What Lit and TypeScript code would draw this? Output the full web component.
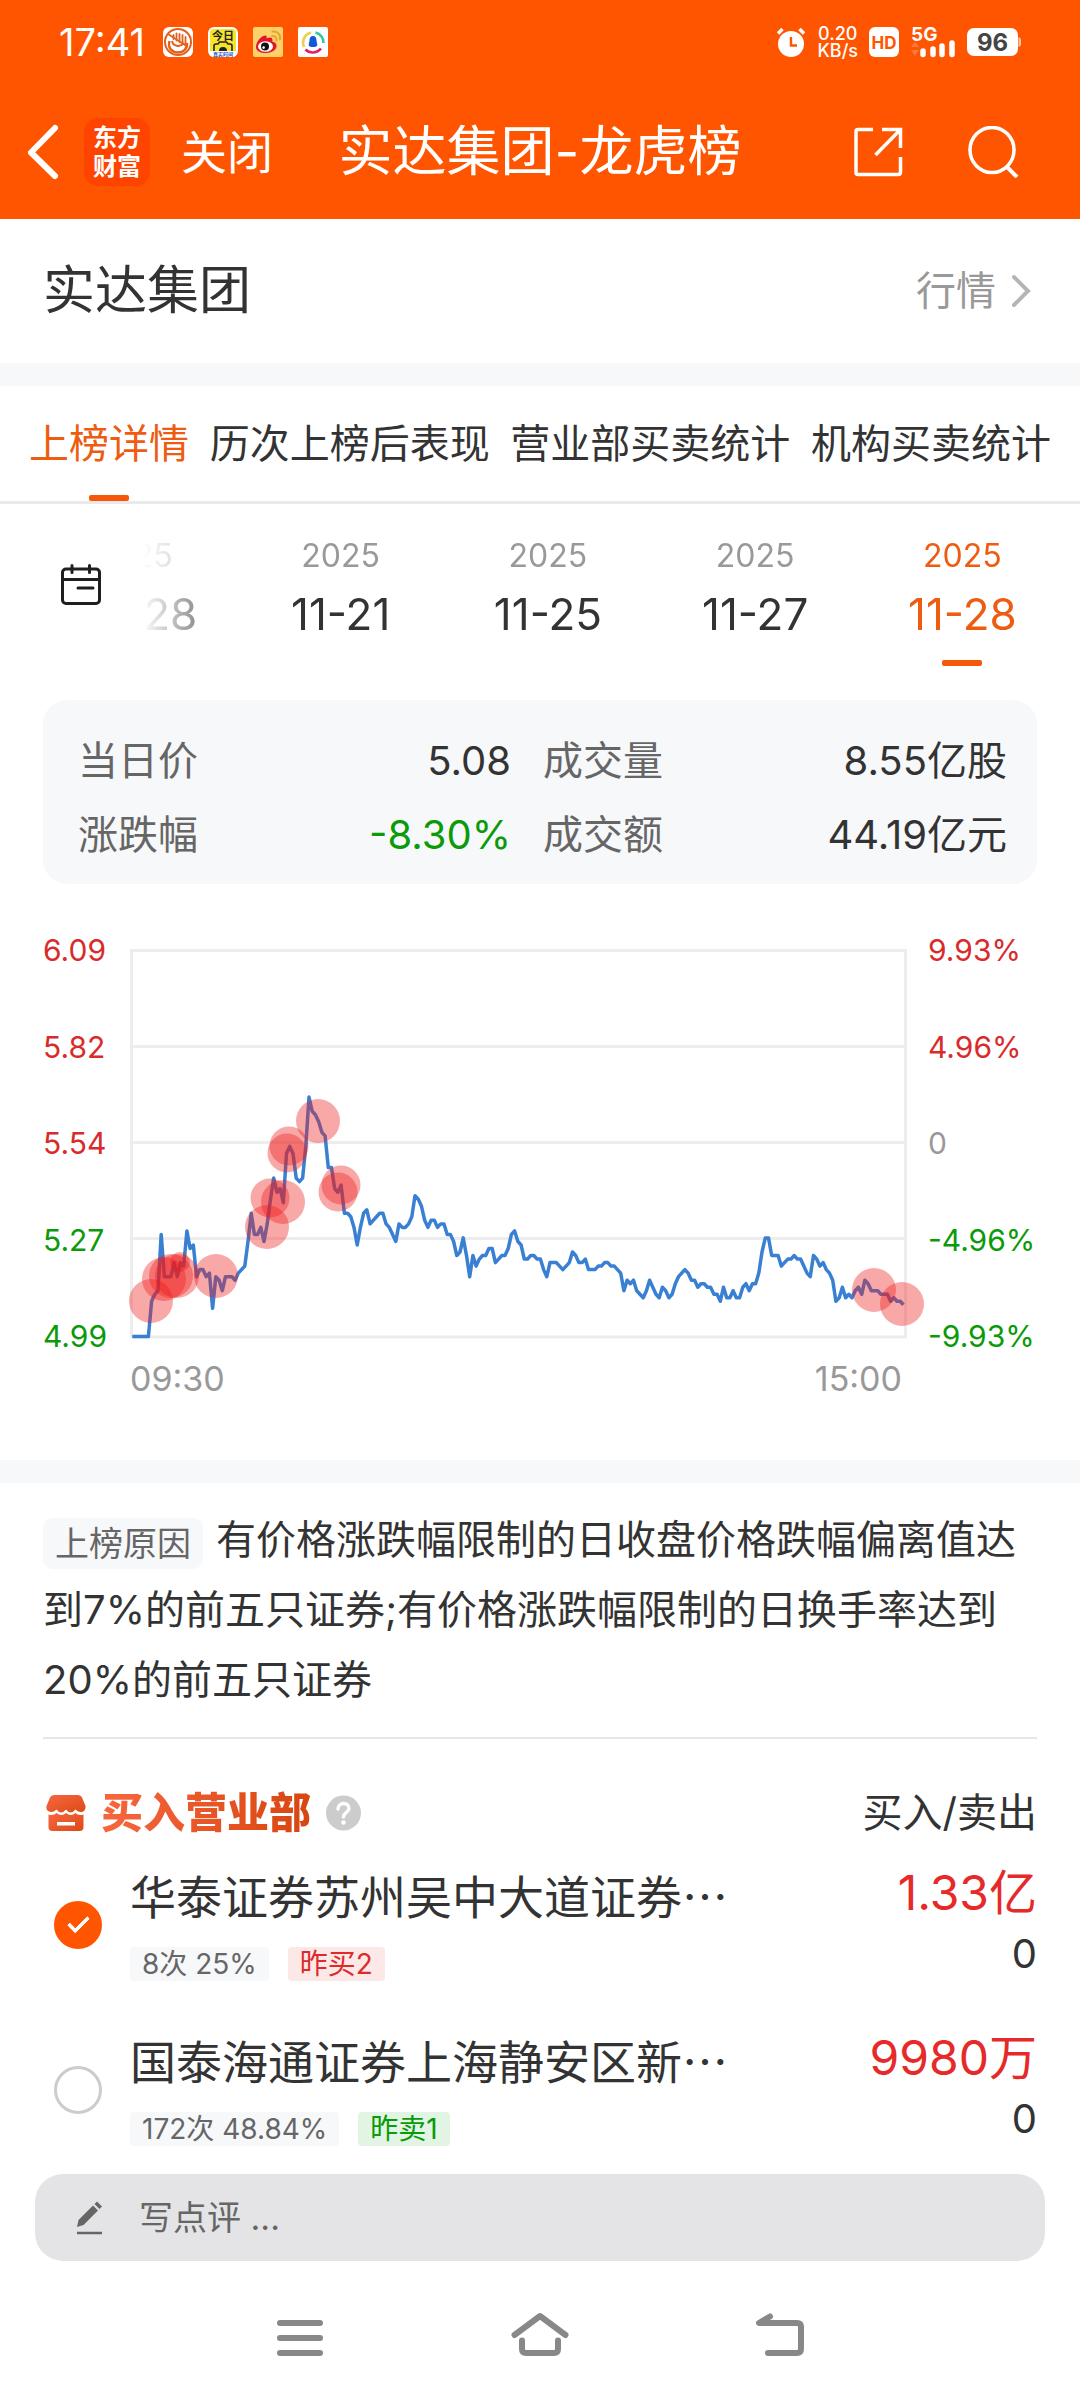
import { LitElement, html, css, svg } from "lit";
import { customElement, state } from "lit/decorators.js";
import { classMap } from "lit/directives/class-map.js";

interface TradingDay {
  year: string;
  day: string;
}

interface Seat {
  name: string;
  record: string;
  flag: string;
  side: "buy" | "sell";
  bought: string;
  sold: string;
}

const TABS = ["上榜详情", "历次上榜后表现", "营业部买卖统计", "机构买卖统计"];

const DAYS: TradingDay[] = [
  { year: "2025", day: "08-28" },
  { year: "2025", day: "11-21" },
  { year: "2025", day: "11-25" },
  { year: "2025", day: "11-27" },
  { year: "2025", day: "11-28" },
];

const SEATS: Seat[] = [
  { name: "华泰证券苏州吴中大道证券…", record: "8次 25%", flag: "昨买2", side: "buy", bought: "1.33亿", sold: "0" },
  { name: "国泰海通证券上海静安区新…", record: "172次 48.84%", flag: "昨卖1", side: "sell", bought: "9980万", sold: "0" },
];

const PRICE_LABELS = [
  { text: "6.09", tone: "up" },
  { text: "5.82", tone: "up" },
  { text: "5.54", tone: "up" },
  { text: "5.27", tone: "down" },
  { text: "4.99", tone: "down" },
];

const PERCENT_LABELS = [
  { text: "9.93%", tone: "up" },
  { text: "4.96%", tone: "up" },
  { text: "0", tone: "flat" },
  { text: "-4.96%", tone: "down" },
  { text: "-9.93%", tone: "down" },
];

/** Price per minute from 09:30 to 15:00, in hundredths of a yuan. */
const MINUTES = [
  499, 499, 499, 499, 499, 499, 509, 511, 512, 528, 516, 516, 516, 520, 516, 520, 519, 529, 524, 525,
  516, 518, 518, 516, 517, 507, 516, 515, 512, 516, 516, 516, 515, 517, 518, 519, 526, 534, 528, 528,
  530, 526, 531, 538, 544, 540, 541, 537, 551, 553, 551, 544, 543, 544, 553, 567, 563, 562, 560, 557,
  556, 547, 547, 541, 540, 542, 534, 534, 533, 530, 525, 530, 534, 535, 531, 532, 533, 534, 534, 531,
  530, 528, 526, 531, 530, 530, 531, 533, 539, 538, 536, 532, 530, 532, 532, 530, 531, 531, 528, 528,
  526, 522, 523, 527, 522, 516, 522, 519, 521, 522, 522, 524, 524, 520, 521, 522, 522, 524, 528, 529,
  526, 525, 521, 521, 522, 522, 521, 521, 518, 516, 520, 520, 520, 519, 518, 519, 520, 523, 522, 520,
  520, 521, 518, 518, 518, 519, 519, 520, 520, 519, 519, 518, 517, 512, 515, 514, 515, 512, 511, 510,
  512, 515, 513, 511, 510, 513, 512, 510, 511, 514, 516, 517, 518, 517, 515, 515, 513, 514, 514, 513,
  513, 511, 511, 509, 513, 510, 510, 512, 510, 510, 513, 514, 512, 514, 514, 517, 523, 527, 527, 522,
  522, 522, 519, 520, 521, 521, 522, 521, 521, 519, 517, 516, 522, 521, 519, 520, 518, 517, 515, 509,
  510, 513, 510, 511, 510, 512, 513, 511, 515, 514, 512, 512, 512, 511, 511, 511, 509, 510, 509, 509,
  508,
];

/** Large orders on the chart: centre x, centre y, radius. */
const ORDERS = [
  [21, 352, 22], [34, 330, 22], [41, 327, 22], [47, 327, 22], [50, 313, 10], [86, 327, 22],
  [137, 278, 22], [140, 249, 19.5], [153, 253, 22], [159, 197, 19.5], [157, 204, 19.5],
  [188, 172, 22], [211, 236, 19.5], [208, 243, 19.5], [744, 341, 22], [772, 355, 22],
];

const GRID_Y = [1.5, 97.5, 193.5, 289.5, 388];

@customElement("price-chart")
export class PriceChart extends LitElement {
  static styles = css`
    :host { display: block; }
    .chart { display: grid; grid-template-columns: 87px minmax(0, 1fr) 130px; }
    .plot { display: block; width: 100%; height: auto; overflow: visible; }
    .labels { display: flex; flex-direction: column; justify-content: space-between; margin: -19px 0 -17px; font-size: 30px; line-height: 40px; }
    .percents { padding-left: 21px; }
    .up { color: #d92b2b; }
    .down { color: #0a9a0a; }
    .flat, .times { color: #999; }
    .times { grid-column: 2; display: flex; justify-content: space-between; margin-top: 20px; padding-right: 5px; font-size: 34px; line-height: 40px; }
    .rule { fill: none; stroke: #ededed; stroke-width: 3; }
    .line { fill: none; stroke: #3a80d2; stroke-width: 3.5; stroke-linejoin: round; }
    .order { fill: #f01a1a; fill-opacity: 0.38; }
  `;

  private get linePoints() {
    return MINUTES.map((p, i) => `${(2.3 + i * 3.213).toFixed(1)},${(387.5 - (p - 499) * 3.52).toFixed(1)}`).join(" ");
  }

  render() {
    return html`
      <div class="chart">
        <div class="labels">${PRICE_LABELS.map((l) => html`<span class=${l.tone}>${l.text}</span>`)}</div>
        <svg class="plot" viewBox="0 0 777 390" role="img" aria-label="分时走势">
          ${GRID_Y.map((y) => svg`<path class="rule" d="M0 ${y}H777" />`)}
          <path class="rule" d="M1.5 0V389M775.5 0V389" />
          <polyline class="line" points=${this.linePoints} />
          ${ORDERS.map(([x, y, r]) => svg`<circle class="order" cx=${x} cy=${y} r=${r} />`)}
        </svg>
        <div class="labels percents">${PERCENT_LABELS.map((l) => html`<span class=${l.tone}>${l.text}</span>`)}</div>
        <div class="times"><span>09:30</span><span>15:00</span></div>
      </div>
    `;
  }
}

@customElement("status-bar")
export class StatusBar extends LitElement {
  static styles = css`
    :host { display: block; }
    .bar { display: flex; align-items: center; justify-content: space-between; height: 84px; padding: 0 59px; color: #fff; }
    .side { display: flex; align-items: center; }
    .left { gap: 15px; }
    .right { gap: 11px; }
    .clock { margin-right: 3px; font-size: 38px; line-height: 40px; }
    .icon { display: block; width: 30px; height: 30px; }
    .speed { display: flex; flex-direction: column; align-items: center; font-size: 18px; line-height: 17px; font-weight: 500; }
    .signal { display: block; width: 46px; height: 32px; overflow: visible; }
    .battery { display: block; width: 54px; height: 28px; }
    .tiny { font-weight: 700; }
  `;

  render() {
    return html`
      <div class="bar">
        <div class="side left">
          <span class="clock">17:41</span>
          <svg class="icon" viewBox="0 0 30 30">
            <rect width="30" height="30" rx="6" fill="#fff" />
            <circle cx="15" cy="15" r="13" fill="none" stroke="#e2601e" stroke-width="2" />
            <path d="M6.500 14C4.500 21 9 25.500 15 25.500c5.500 0 9.500-4 9-9.500" fill="none" stroke="#e2601e" stroke-width="2.400" />
            <path d="M9 14c1 5 7.500 7 12 2" fill="none" stroke="#e2601e" stroke-width="2" />
            <path d="M10.500 8v4M13.500 6.500v7M16.500 7v8M19.500 8v8M22.500 10v7" stroke="#e2601e" stroke-width="1.800" stroke-linecap="round" />
            <path d="M5 7l20 13" stroke="#e2601e" stroke-width="1.600" />
          </svg>
          <svg class="icon" viewBox="0 0 30 30">
            <rect width="30" height="30" rx="6" fill="#fff" />
            <path d="M2 6q0-4 4-4h18q4 0 4 4v18H2z" fill="#f5e32c" />
            <text class="tiny" x="15" y="13" font-size="11" text-anchor="middle" fill="#222">今日</text>
            <path d="M6 24v-5q0-2 2-2h2l1.500-2h7l1.500 2h2q2 0 2 2v5" fill="none" stroke="#222" stroke-width="1.600" />
            <path d="M11 24a4 4 0 0 1 8 0z" fill="#222" />
            <path d="M1 24h28q0 6-5 6H6q-5 0-5-6z" fill="#fff" />
            <text class="tiny" x="15" y="29" font-size="5" text-anchor="middle" fill="#1557d8">真实时间</text>
          </svg>
          <svg class="icon" viewBox="0 0 30 30">
            <rect width="30" height="30" rx="2" fill="#fbd16a" />
            <path d="M3 20C3 15 8 9 12 8.500c2 0 2 1.500 1.500 3 3-1.500 6-1.500 6 1.500 0 .8-.3 1.500-.3 1.500 2.800.7 4.300 2 4.300 4.500 0 4-5 7-10.500 7S3 24 3 20z" fill="#e3152b" />
            <ellipse cx="12.500" cy="19.500" rx="7.500" ry="5.200" fill="#fff" />
            <circle cx="12" cy="19.500" r="4" fill="#111" />
            <circle cx="10.600" cy="20.600" r="1.300" fill="#fff" />
            <path d="M19 9c3-.6 5 1.500 4.500 4.500M19.500 4.500c5-.8 8.500 3 7.500 8" fill="none" stroke="#eda22d" stroke-width="2" stroke-linecap="round" />
          </svg>
          <svg class="icon" viewBox="0 0 30 30">
            <rect width="30" height="30" rx="2" fill="#fff" />
            <path d="M6 20A10.500 10.500 0 0 1 13 5.500" fill="none" stroke="#ecd04a" stroke-width="2.600" />
            <path d="M17.500 5.500A10.500 10.500 0 0 1 25.500 16" fill="none" stroke="#36c3a6" stroke-width="2.600" />
            <path d="M7.500 22.500A10.500 10.500 0 0 0 23 21.500" fill="none" stroke="#e0206c" stroke-width="2.600" />
            <path d="M15 9c2.500 0 3.500 2 3.500 4.500 0 1.500.8 2.500.8 4 0 2-1.500 2.500-4.300 2.500s-4.300-.5-4.300-2.500c0-1.500.8-2.500.8-4C11.500 11 12.500 9 15 9z" fill="#1259d6" />
          </svg>
        </div>
        <div class="side right">
          <svg class="icon" viewBox="0 0 30 30">
            <circle cx="15" cy="17" r="13" fill="#fff" />
            <path d="M2 6.500L6.500 2M28 6.500L23.500 2" stroke="#fff" stroke-width="3.400" />
            <path d="M15 10v8.500h6" fill="none" stroke="#ff5500" stroke-width="2.400" />
          </svg>
          <div class="speed"><span>0.20</span><span>KB/s</span></div>
          <svg class="icon" viewBox="0 0 30 30">
            <rect width="30" height="30" rx="6" fill="#fff" />
            <text class="tiny" x="15" y="21.500" font-size="17" text-anchor="middle" fill="#ff5500">HD</text>
          </svg>
          <svg class="signal" viewBox="0 0 46 32">
            <text class="tiny" x="1" y="15" font-size="19" fill="#fff">5G</text>
            <path d="M1 21l4-5 4 5zM1 24l4 6 4-6z" fill="#ff7a3c" />
            <path d="M13 25v3.500M23 23v5.500M32 20v8.500M42 17v11.500" stroke="#fff" stroke-width="5.500" stroke-linecap="round" />
          </svg>
          <svg class="battery" viewBox="0 0 54 28">
            <rect width="51" height="28" rx="7" fill="#fff" />
            <path d="M51.500 9q3 1 3 5t-3 5z" fill="#ffc7a8" />
            <text class="tiny" x="25.500" y="22.500" font-size="24" text-anchor="middle" fill="#444">96</text>
          </svg>
        </div>
      </div>
    `;
  }
}

@customElement("app-root")
export class AppRoot extends LitElement {
  static styles = css`
    :host {
      display: block;
      min-height: 100vh;
      background: #fff;
      color: #333;
      font-family: Inter, "Noto Sans CJK SC", sans-serif;
      font-size: 40px;
      line-height: 50px;
    }
    * { box-sizing: border-box; }
    button, input { margin: 0; padding: 0; border: 0; background: none; color: inherit; font: inherit; }
    a { color: inherit; text-decoration: none; }
    svg { display: block; }
    h1, h2, p, dl, dd, ul { margin: 0; padding: 0; font-weight: 400; list-style: none; }

    .top { background: #ff5500; color: #fff; }
    .titlebar { display: grid; grid-template-columns: 1fr auto 1fr; align-items: center; height: 135px; }
    .lead { display: flex; align-items: center; padding-left: 26px; }
    .back { width: 34px; height: 58px; margin-right: 24px; }
    .logo { display: flex; flex-direction: column; align-items: center; justify-content: center; width: 66px; height: 68px; margin-right: 31px; border-radius: 14px; background: #ff4400; font-size: 24px; line-height: 29px; font-weight: 700; }
    .close { font-size: 46px; line-height: 60px; }
    .title { font-size: 54px; line-height: 66px; }
    .actions { display: flex; align-items: center; justify-content: flex-end; gap: 64px; padding-right: 61px; }

    .stock { display: flex; align-items: center; justify-content: space-between; height: 144px; padding: 0 48px 0 43px; }
    .stock-name { font-size: 52px; line-height: 60px; }
    .quote { display: flex; align-items: center; gap: 14px; color: #999; }
    .band { height: 23px; background: #f7f8fa; }

    .tabs { display: flex; justify-content: space-between; padding: 28px 29px 0; border-bottom: 3px solid #e9e9e9; }
    .tab { display: flex; flex-direction: column; align-items: center; line-height: 60px; white-space: nowrap; }
    .mark { width: 40px; height: 6px; border-radius: 2px; background: transparent; }
    .tab .mark { margin-top: 21px; }
    .active { color: #ee5c11; }
    .active .mark { background: #f5570b; }

    .days { display: flex; align-items: flex-start; padding: 32px 14px 34px 60px; }
    .calendar { flex: none; width: 42px; margin: 27px 22px 0 0; }
    .strip { flex: 1; min-width: 0; display: flex; justify-content: flex-end; overflow: hidden; -webkit-mask-image: linear-gradient(to right, transparent 18px, #000 118px); mask-image: linear-gradient(to right, transparent 18px, #000 118px); }
    .day { flex: 0 0 22%; display: flex; flex-direction: column; align-items: center; }
    .year { font-size: 32px; line-height: 40px; color: #999; }
    .date { margin-top: 13px; font-size: 44px; }
    .day .mark { margin-top: 21px; }
    .active .year { color: inherit; }

    .stats { display: grid; grid-template-columns: 14fr 15fr; column-gap: 32px; margin: 0 43px; padding: 24px 30px 12px 35px; border-radius: 24px; background: #f7f8fa; line-height: 74px; }
    .stat { display: flex; justify-content: space-between; }
    .stat-label { color: #666; }
    .fall { color: #0a9a0a; }

    .chart-box { padding: 65px 43px 61px; }

    .reason { margin: 0 43px; padding: 22px 0; border-bottom: 2px solid #e6e6e6; line-height: 70px; }
    .badge { display: inline-block; vertical-align: middle; margin-right: 13px; padding: 0 12px; border-radius: 10px; background: #f7f8fa; color: #666; font-size: 34px; line-height: 51px; }

    .seats-head { display: flex; align-items: center; justify-content: space-between; padding: 44px 43px 26px; line-height: 60px; }
    .seats-title { display: flex; align-items: center; gap: 15px; padding-left: 3px; }
    .heading { font-size: 42px; font-weight: 900; line-height: 60px; background: linear-gradient(to right, #f7673f, #d8460f); -webkit-background-clip: text; background-clip: text; color: transparent; }

    .seats { display: flex; flex-direction: column; gap: 53px; padding: 0 43px 0 54px; }
    .seat { display: grid; grid-template-columns: 48px minmax(0, 1fr) auto; column-gap: 28px; align-items: center; }
    .pick { appearance: none; width: 48px; height: 48px; border: 3px solid #ccc; border-radius: 50%; display: grid; place-items: center; }
    .pick:checked { border-color: #ff5500; background: #ff5500; }
    .pick:checked::after { content: ""; width: 17px; height: 8px; margin-bottom: 6px; border: solid #fff; border-width: 0 0 4px 4px; border-radius: 2px; transform: rotate(-45deg); }
    .seat-name { display: block; font-family: "Noto Sans CJK SC", sans-serif; font-size: 46px; line-height: 50px; white-space: nowrap; }
    .tags { display: flex; gap: 19px; margin-top: 28px; font-size: 28px; line-height: 34px; }
    .tag { padding: 0 12px; border-radius: 4px; background: #f7f8fa; color: #666; }
    .buy { background: #fde8e8; color: #dc2b2b; }
    .sell { background: #e2f5e4; color: #0a9a0a; }
    .amounts { align-self: start; text-align: right; }
    .bought { display: block; color: #e62a2a; font-size: 48px; line-height: 48px; }
    .sold { display: block; margin-top: 17px; line-height: 40px; }

    .comment { display: flex; align-items: center; gap: 34px; margin: 28px 35px 0; padding: 0 38px; height: 87px; border-radius: 28px; background: #e4e4e6; }
    .comment-input { flex: 1; min-width: 0; outline: 0; color: #666; font-size: 34px; line-height: 50px; }
    .comment-input::placeholder { color: #666; opacity: 1; }

    .system-nav { display: grid; grid-template-columns: repeat(3, 1fr); justify-items: center; padding: 50px 180px 40px; }
  `;

  @state() private tab = 0;
  @state() private day = 4;

  render() {
    return html`
      <header class="top">
        <status-bar></status-bar>
        <div class="titlebar">
          <div class="lead">
            <button class="back" aria-label="返回">
              <svg width="34" height="58" viewBox="0 0 34 58"><path d="M29 5L5 29.500 29 53" fill="none" stroke="#fff" stroke-width="6" stroke-linecap="round" stroke-linejoin="round" /></svg>
            </button>
            <div class="logo"><span>东方</span><span>财富</span></div>
            <button class="close">关闭</button>
          </div>
          <h1 class="title">实达集团-龙虎榜</h1>
          <div class="actions">
            <button aria-label="分享">
              <svg width="50" height="52" viewBox="0 0 50 52" fill="none" stroke="#fff" stroke-width="3.500">
                <path d="M20 3.500H5q-2 0-2 2v41q0 2 2 2h40q2.500 0 2.500-2.500V31M29 3.500h18.500V22M47 4L22.500 29" />
              </svg>
            </button>
            <button aria-label="搜索">
              <svg width="52" height="52" viewBox="0 0 52 52" fill="none" stroke="#fff" stroke-width="3.500">
                <ellipse cx="25" cy="24" rx="22" ry="22.500" /><path d="M39 40l11 11" stroke-width="4" />
              </svg>
            </button>
          </div>
        </div>
      </header>

      <section class="stock">
        <h2 class="stock-name">实达集团</h2>
        <a class="quote" href="#quote">行情
          <svg width="22" height="34" viewBox="0 0 22 34"><path d="M4 3l14 14L4 31" fill="none" stroke="#b5b5b5" stroke-width="4" stroke-linecap="round" /></svg>
        </a>
      </section>
      <div class="band"></div>

      <nav class="tabs">
        ${TABS.map((label, i) => html`
          <button class=${classMap({ tab: true, active: i === this.tab })} @click=${() => (this.tab = i)}>
            <span>${label}</span><span class="mark"></span>
          </button>`)}
      </nav>

      <section class="days">
        <button class="calendar" aria-label="选择日期">
          <svg width="42" height="44" viewBox="0 0 42 44" fill="none" stroke="#1f1f1f" stroke-width="3" stroke-linecap="round">
            <rect x="2.500" y="6" width="37" height="34.500" rx="3.500" /><path d="M3 16.500h36M18 25h15M12 2.500v7M29.500 2.500v7" />
          </svg>
        </button>
        <div class="strip">
          ${DAYS.map((d, i) => html`
            <button class=${classMap({ day: true, active: i === this.day })} @click=${() => (this.day = i)}>
              <span class="year">${d.year}</span><span class="date">${d.day}</span><span class="mark"></span>
            </button>`)}
        </div>
      </section>

      <dl class="stats">
        <div class="stat"><dt class="stat-label">当日价</dt><dd>5.08</dd></div>
        <div class="stat"><dt class="stat-label">成交量</dt><dd>8.55亿股</dd></div>
        <div class="stat"><dt class="stat-label">涨跌幅</dt><dd class="fall">-8.30%</dd></div>
        <div class="stat"><dt class="stat-label">成交额</dt><dd>44.19亿元</dd></div>
      </dl>

      <section class="chart-box"><price-chart></price-chart></section>
      <div class="band"></div>

      <p class="reason"><span class="badge">上榜原因</span>有价格涨跌幅限制的日收盘价格跌幅偏离值达到7%的前五只证券;有价格涨跌幅限制的日换手率达到20%的前五只证券</p>

      <section>
        <div class="seats-head">
          <div class="seats-title">
            <svg width="40" height="36" viewBox="0 0 40 36">
              <defs><linearGradient id="shop" x1="0" y1="0" x2="1" y2="1"><stop offset="0" stop-color="#f7673f" /><stop offset="1" stop-color="#dc4a17" /></linearGradient></defs>
              <path d="M8 0h24q3 0 4 2.500l3.500 8.500q.5 5-4 6-3 .5-6-2.500-5 6-9.500 0-5 6-9.500 0-3 3-6 2.500-5-1-4-6L4 2.500Q5 0 8 0z" fill="url(#shop)" />
              <path d="M2.500 19.500q5 1.500 8-1.500 5 4 9.500 0 5 4 9.500 0 3 3 8 1.500V32q0 4-4 4h-27q-4 0-4-4zM11 27v3.500h18V27z" fill-rule="evenodd" fill="url(#shop)" />
            </svg>
            <h2 class="heading">买入营业部</h2>
            <button aria-label="说明">
              <svg width="35" height="36" viewBox="0 0 35 36">
                <circle cx="17.500" cy="18" r="17.500" fill="#ccc" />
                <path d="M12 14c0-7 11-7.500 11-.5 0 4-5.500 4-5.500 8.500" fill="none" stroke="#fff" stroke-width="3.400" stroke-linecap="round" />
                <circle cx="17.500" cy="27.500" r="2.300" fill="#fff" />
              </svg>
            </button>
          </div>
          <span>买入/卖出</span>
        </div>
        <ul class="seats">
          ${SEATS.map((s, i) => html`
            <li class="seat">
              <input class="pick" type="checkbox" id="seat-${i}" .checked=${i === 0} />
              <div>
                <label class="seat-name" for="seat-${i}">${s.name}</label>
                <div class="tags"><span class="tag">${s.record}</span><span class="tag ${s.side}">${s.flag}</span></div>
              </div>
              <div class="amounts"><span class="bought">${s.bought}</span><span class="sold">${s.sold}</span></div>
            </li>`)}
        </ul>
      </section>

      <label class="comment">
        <svg width="32" height="36" viewBox="0 0 32 36">
          <path d="M4 27l1.500-7L20 5.500l5 5L10.500 25zM21.500 4l2.500-2.500 5 5L26.500 9z" fill="#666" />
          <path d="M4 33h25" stroke="#666" stroke-width="2.500" />
        </svg>
        <input class="comment-input" type="text" placeholder="写点评 ..." aria-label="写点评" />
      </label>

      <nav class="system-nav">
        <button aria-label="最近任务">
          <svg width="60" height="48" viewBox="0 0 60 48"><path d="M10 12h40M10 27h40M10 42h40" stroke="#888" stroke-width="6" stroke-linecap="round" /></svg>
        </button>
        <button aria-label="主页">
          <svg width="60" height="48" viewBox="0 0 60 48" fill="none" stroke="#888" stroke-width="6" stroke-linecap="round" stroke-linejoin="round"><path d="M4.500 24L30 5l25.500 19M12 29.500V38q0 4 4 4h28q4 0 4-4v-8.500" /></svg>
        </button>
        <button aria-label="后退">
          <svg width="60" height="48" viewBox="0 0 60 48" fill="none" stroke="#888" stroke-width="6" stroke-linecap="round" stroke-linejoin="round"><path d="M20 5.500L9 12h38q4 0 4 4v22q0 4-4 4H18" /></svg>
        </button>
      </nav>
    `;
  }
}
